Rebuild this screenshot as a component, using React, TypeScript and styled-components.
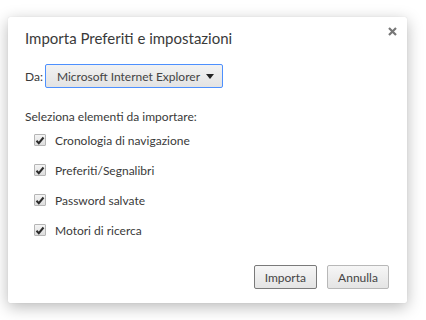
import React from 'react';
import styled, { createGlobalStyle } from 'styled-components';

const GlobalStyle = createGlobalStyle`
  html, body {
    margin: 0;
    padding: 0;
    background: #ffffff;
  }
  body {
    font-family: 'Lato', 'Segoe UI', 'Noto Sans', sans-serif;
    color: #333;
  }
`;

const Page = styled.div`
  padding: 17px 0 0 8px;
  width: 426px;
  height: 320px;
  box-sizing: border-box;
  overflow: hidden;
`;

const Dialog = styled.div`
  position: relative;
  width: 399px;
  height: 286px;
  box-sizing: border-box;
  padding: 11px 18px 14px 17px;
  background: #ffffff;
  border-radius: 2px;
  box-shadow: 0 4px 16px rgba(0, 0, 0, 0.28), 0 0 1px rgba(0, 0, 0, 0.15);
  display: flex;
  flex-direction: column;
`;

const Title = styled.h1`
  margin: 0;
  font-size: 15px;
  line-height: 20px;
  font-weight: 400;
  color: #3a3a3a;
`;

const CloseButton = styled.button`
  position: absolute;
  top: 8px;
  right: 9px;
  width: 12px;
  height: 12px;
  padding: 0;
  border: none;
  background: transparent;
  display: flex;
  align-items: center;
  justify-content: center;
  cursor: pointer;
`;

const FromRow = styled.div`
  margin-top: 16px;
  display: flex;
  align-items: center;
  gap: 2px;
  font-size: 12px;
  color: #3a3a3a;
`;

const Select = styled.div`
  height: 24px;
  width: 178px;
  box-sizing: border-box;
  padding: 0 8px 0 11px;
  border: 1px solid #4d90fe;
  border-radius: 2px;
  background: linear-gradient(#f2f2f2, #e3e3e3);
  display: flex;
  align-items: center;
  justify-content: space-between;
  font-size: 12px;
  color: #444;
`;

const Arrow = styled.span`
  width: 0;
  height: 0;
  border-left: 4px solid transparent;
  border-right: 4px solid transparent;
  border-top: 5px solid #222;
`;

const SectionLabel = styled.div`
  margin-top: 21px;
  font-size: 12px;
  line-height: 16px;
  color: #3a3a3a;
`;

const CheckList = styled.div`
  display: flex;
  flex-direction: column;
  padding-left: 9px;
`;

const CheckRow = styled.label`
  height: 30px;
  display: flex;
  align-items: center;
  gap: 9px;
  font-size: 12px;
  color: #3a3a3a;
`;

const Box = styled.span`
  width: 12px;
  height: 12px;
  box-sizing: border-box;
  border: 1px solid #b5b5b5;
  border-radius: 1px;
  background: linear-gradient(#f4f4f4, #dedede);
  display: flex;
  align-items: center;
  justify-content: center;
`;

const Footer = styled.div`
  margin-top: auto;
  display: flex;
  justify-content: flex-end;
  gap: 10px;
`;

const Button = styled.button<{ $focused?: boolean }>`
  height: 24px;
  min-width: 62px;
  padding: 0 10px;
  box-sizing: border-box;
  border: 1px solid ${(p) => (p.$focused ? '#7a7a7a' : '#b8b8b8')};
  border-radius: 2px;
  background: linear-gradient(#f6f6f6, #e4e4e4);
  font-family: inherit;
  font-size: 12px;
  color: #444;
  cursor: pointer;
`;

const items = [
  'Cronologia di navigazione',
  'Preferiti/Segnalibri',
  'Password salvate',
  'Motori di ricerca',
];

const CheckMark = () => (
  <svg width="10" height="9" viewBox="0 0 10 9">
    <path d="M1.5 4.8 L3.8 7.2 L8.5 1.5" fill="none" stroke="#2b2b2b" strokeWidth="2" />
  </svg>
);

const App: React.FC = () => {
  return (
    <>
      <GlobalStyle />
      <Page>
        <Dialog>
          <Title>Importa Preferiti e impostazioni</Title>
          <CloseButton aria-label="Chiudi">
            <svg width="9" height="9" viewBox="0 0 9 9">
              <path d="M1 1 L8 8 M8 1 L1 8" stroke="#777" strokeWidth="2.2" />
            </svg>
          </CloseButton>
          <FromRow>
            <span>Da:</span>
            <Select>
              <span>Microsoft Internet Explorer</span>
              <Arrow />
            </Select>
          </FromRow>
          <SectionLabel>Seleziona elementi da importare:</SectionLabel>
          <CheckList>
            {items.map((item) => (
              <CheckRow key={item}>
                <Box>
                  <CheckMark />
                </Box>
                {item}
              </CheckRow>
            ))}
          </CheckList>
          <Footer>
            <Button $focused>Importa</Button>
            <Button>Annulla</Button>
          </Footer>
        </Dialog>
      </Page>
    </>
  );
};

export default App;
